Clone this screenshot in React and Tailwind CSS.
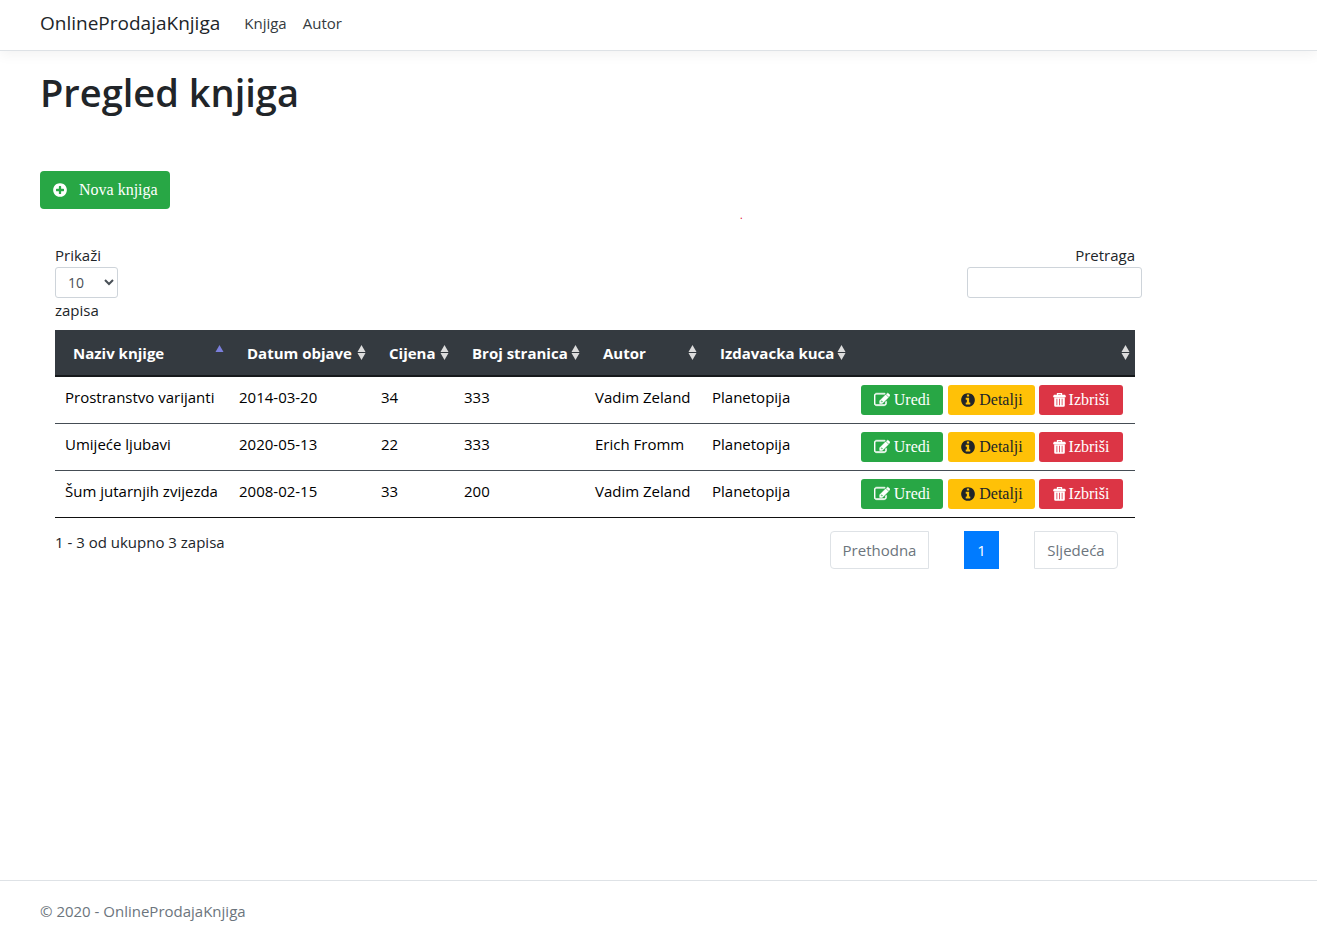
import React from "react";

const books = [
  ["Prostranstvo varijanti", "2014-03-20", "34", "333", "Vadim Zeland", "Planetopija"],
  ["Umijeće ljubavi", "2020-05-13", "22", "333", "Erich Fromm", "Planetopija"],
  ["Šum jutarnjih zvijezda", "2008-02-15", "33", "200", "Vadim Zeland", "Planetopija"],
];

const columns = [
  { label: "Naziv knjige", width: "w-[174px]", sorted: true },
  { label: "Datum objave", width: "w-[142px]" },
  { label: "Cijena", width: "w-[83px]" },
  { label: "Broj stranica", width: "w-[131px]" },
  { label: "Autor", width: "w-[117px]" },
  { label: "Izdavacka kuca", width: "w-[149px]" },
  { label: "", width: "w-auto" },
];

function Icon({ d, bold = false }) {
  return (
    <svg
      viewBox="0 0 1792 1792"
      className="size-4 shrink-0 fill-current"
      stroke={bold ? "currentColor" : "none"}
      strokeWidth="60"
      aria-hidden="true"
    >
      <path d={d} />
    </svg>
  );
}

const PLUS =
  "M1344 960v-128q0-26-19-45t-45-19h-256v-256q0-26-19-45t-45-19h-128q-26 0-45 19t-19 45v256h-256q-26 0-45 19t-19 45v128q0 26 19 45t45 19h256v256q0 26 19 45t45 19h128q26 0 45-19t19-45v-256h256q26 0 45-19t19-45zm320-64q0 209-103 385.500t-279.500 279.500-385.500 103-385.500-103-279.500-279.500-103-385.500 103-385.500 279.500-279.500 385.500-103 385.500 103 279.500 279.500 103 385.500z";
const EDIT =
  "M888 1184l116-116-152-152-116 116v56h96v96h56zm520 -126v190q0 119-84.500 203.500t-203.500 84.500h-832q-119 0-203.500-84.500t-84.500-203.500v-832q0-119 84.500-203.500t203.500-84.500h832q63 0 117 25 15 7 18 23 3 17-9 29l-49 49q-14 14-32 8-23-6-45-6h-832q-66 0-113 47t-47 113v832q0 66 47 113t113 47h832q66 0 113-47t47-113v-126q0-13 9-22l64-64q15-15 35-7t20 29zm-96-738l288 288-672 672h-288v-288zm444 132l-92 92-288-288 92-92q28-28 68-28t68 28l152 152q28 28 28 68t-28 68z";
const INFO =
  "M1152 1376v-160q0-14-9-23t-23-9h-96v-512q0-14-9-23t-23-9h-320q-14 0-23 9t-9 23v160q0 14 9 23t23 9h96v320h-96q-14 0-23 9t-9 23v160q0 14 9 23t23 9h448q14 0 23-9t9-23zm-128-896v-160q0-14-9-23t-23-9h-192q-14 0-23 9t-9 23v160q0 14 9 23t23 9h192q14 0 23-9t9-23zm640 416q0 209-103 385.500t-279.500 279.500-385.500 103-385.500-103-279.500-279.500-103-385.500 103-385.500 279.500-279.500 385.500-103 385.500 103 279.500 279.500 103 385.500z";

function TrashIcon() {
  return (
    <svg viewBox="0 0 13 14" className="h-[14px] w-[13px] shrink-0" aria-hidden="true">
      <path d="M4.500 2V.7h4V2" fill="none" stroke="currentColor" strokeWidth="1.3" />
      <path
        fill="currentColor"
        fillRule="evenodd"
        d="M1 1.800h11l.8 1.200v1.200H.2V3zM1.200 4h10.600v8.500q0 1.300-1.300 1.300h-8q-1.300 0-1.300-1.300zM3.500 5.800v6.400h.8V5.800zM6.100 5.800v6.400h.8V5.800zM8.700 5.800v6.400h.8V5.800z"
      />
    </svg>
  );
}

function SortIcon({ sorted }) {
  return (
    <svg viewBox="0 0 9 15" className="h-[15px] w-[9px] shrink-0" aria-hidden="true">
      <path d="M4.500 0L8.500 7H.5z" fill={sorted ? "#7b7fdc" : "#dcdcdc"} />
      {!sorted && <path d="M4.500 15L.5 8h8z" fill="#dcdcdc" />}
    </svg>
  );
}

const action =
  "flex h-[30px] items-center justify-center rounded-[3px] font-['Liberation_Serif',serif] text-base";

export default function App() {
  return (
    <div className="flex min-h-screen flex-col bg-white font-['Open_Sans','Noto_Sans',sans-serif] text-[15px] leading-6 text-[#212529]">
      <header className="border-b border-[#dee2e6] shadow-[0_4px_12px_rgba(0,0,0,0.05)]">
        <nav className="flex h-[50px] items-center px-10 pb-[5px]">
          <a href="#" className="mr-6 text-[19px]">OnlineProdajaKnjiga</a>
          <a href="#knjiga" className="mr-4 text-[#343a40]">Knjiga</a>
          <a href="#autor" className="text-[#343a40]">Autor</a>
        </nav>
      </header>

      <main className="flex-1 px-10 pt-[17px]">
        <h1 className="text-[38px] font-semibold leading-[48px]">Pregled knjiga</h1>
        <button className="mt-[55px] flex h-[38px] items-center rounded bg-[#28a745] px-3 font-['Liberation_Serif',serif] text-base text-white">
          <Icon d={PLUS} />
          <span className="ml-[11px]">Nova knjiga</span>
        </button>
        <div className="pl-[700px] text-[10px] leading-[12px] text-[#e00020]">.</div>

        <section className="mt-[22px] w-full max-w-[1110px] px-[15px]">
          <div className="flex items-start justify-between">
            <label className="flex flex-col items-start">
              Prikaži
              <select className="h-[31px] w-[63px] rounded-[3px] border border-[#ced4da] bg-white pl-2 text-[14px] text-[#495057]">
                <option>10</option>
              </select>
              <span>zapisa</span>
            </label>
            <label className="-mr-[7px] flex flex-col">
              <span className="pr-[7px] text-right">Pretraga</span>
              <input type="search" className="h-[31px] w-[175px] rounded-[3px] border border-[#ced4da] px-2" />
            </label>
          </div>

          <table className="mt-2 w-full table-fixed border-collapse border-b border-[#111] text-black">
            <thead className="bg-[#343a40] text-white">
              <tr className="h-[46px] border-b-2 border-[#16191c]">
                {columns.map((c) => (
                  <th key={c.label} scope="col" className={`${c.width} pl-[18px] pr-[5px] text-left font-bold whitespace-nowrap`}>
                    <button className="flex w-full items-center justify-between" aria-label={c.label || "Akcije"}>
                      <span>{c.label}</span>
                      <SortIcon sorted={c.sorted} />
                    </button>
                  </th>
                ))}
              </tr>
            </thead>
            <tbody>
              {books.map((b) => (
                <tr key={b[0]} className="h-[47px] border-b border-[#454d55] last:border-[#111]">
                  {b.map((v, i) => (
                    <td key={i} className="pl-[10px] pb-[6px] whitespace-nowrap">{v}</td>
                  ))}
                  <td className="pl-[10px]">
                    <div className="flex">
                      <button className={`${action} mr-[5px] w-[82px] gap-1 bg-[#28a745] text-white`}>
                        <Icon d={EDIT} bold />Uredi
                      </button>
                      <button className={`${action} mr-1 w-[87px] gap-[3px] bg-[#ffc107] text-[#212529]`}>
                        <Icon d={INFO} />Detalji
                      </button>
                      <button className={`${action} w-[84px] gap-[3px] bg-[#dc3545] text-white`}>
                        <TrashIcon />Izbriši
                      </button>
                    </div>
                  </td>
                </tr>
              ))}
            </tbody>
          </table>

          <div className="mt-[13px] flex items-start justify-between">
            <p className="-mt-px">1 - 3 od ukupno 3 zapisa</p>
            <nav className="mr-[17px] flex gap-[35px]">
              <button className="h-[38px] w-[99px] rounded-l border border-[#dee2e6] text-[#6c757d]">Prethodna</button>
              <button className="h-[38px] w-[35px] bg-[#007bff] text-white">1</button>
              <button className="h-[38px] w-[84px] rounded-r border border-[#dee2e6] text-[#6c757d]">Sljedeća</button>
            </nav>
          </div>
        </section>
      </main>

      <footer className="border-t border-[#dee2e6] px-10 pt-[18px] pb-4 text-[#6c757d]">
        © 2020 - OnlineProdajaKnjiga
      </footer>
    </div>
  );
}
